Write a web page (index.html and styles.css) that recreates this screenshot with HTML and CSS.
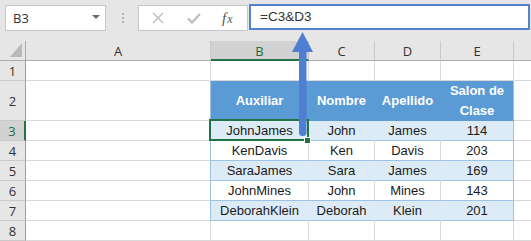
FILE: index.html
```html
<!DOCTYPE html>
<html lang="es">
<head>
    <meta charset="UTF-8">
    <title>Concatenar nombres</title>
    <link rel="stylesheet" href="styles.css">
</head>
<body>
    <div class="formula-bar">
        <div class="name-box">
            <span>B3</span>
            <span class="drop"></span>
        </div>
        <div class="grip"><i></i><i></i><i></i></div>
        <div class="fx-box">
            <svg class="ico" width="12" height="12" viewBox="0 0 12 12"><path d="M1 1L11 11M11 1L1 11" stroke="#bdbdbd" stroke-width="1.4" fill="none"/></svg>
            <svg class="ico" width="14" height="12" viewBox="0 0 14 12"><path d="M1 6.5L5 10.5L13 2" stroke="#bdbdbd" stroke-width="2.2" fill="none"/></svg>
            <span class="fx"><i>f</i><i class="x">x</i></span>
        </div>
        <div class="formula">=C3&amp;D3</div>
    </div>

    <div class="sheet">
        <div class="hd corner"><svg width="12" height="14" viewBox="0 0 12 14"><path d="M12 0V14H0Z" fill="#b9b9b9"/></svg></div>
        <div class="hd col">A</div>
        <div class="hd col on">B</div>
        <div class="hd col">C</div>
        <div class="hd col">D</div>
        <div class="hd col">E</div>
        <div class="hd col last"></div>

        <div class="hd row">1</div>
        <div class="c"></div><div class="c"></div><div class="c"></div><div class="c"></div><div class="c"></div><div class="c last"></div>

        <div class="hd row">2</div>
        <div class="c to-tbl"></div>
        <div class="c th">Auxiliar</div>
        <div class="c th">Nombre</div>
        <div class="c th">Apellido</div>
        <div class="c th end">Salon de<br>Clase</div>
        <div class="c last"></div>

        <div class="hd row on">3</div>
        <div class="c to-tbl"></div>
        <div class="c band sel">JohnJames<span class="handle"></span></div>
        <div class="c band">John</div>
        <div class="c band">James</div>
        <div class="c band end">114</div>
        <div class="c last"></div>

        <div class="hd row">4</div>
        <div class="c to-tbl"></div>
        <div class="c plain">KenDavis</div>
        <div class="c plain">Ken</div>
        <div class="c plain">Davis</div>
        <div class="c plain end">203</div>
        <div class="c last"></div>

        <div class="hd row">5</div>
        <div class="c to-tbl"></div>
        <div class="c band">SaraJames</div>
        <div class="c band">Sara</div>
        <div class="c band">James</div>
        <div class="c band end">169</div>
        <div class="c last"></div>

        <div class="hd row">6</div>
        <div class="c to-tbl"></div>
        <div class="c plain">JohnMines</div>
        <div class="c plain">John</div>
        <div class="c plain">Mines</div>
        <div class="c plain end">143</div>
        <div class="c last"></div>

        <div class="hd row">7</div>
        <div class="c to-tbl"></div>
        <div class="c band">DeborahKlein</div>
        <div class="c band">Deborah</div>
        <div class="c band">Klein</div>
        <div class="c band end">201</div>
        <div class="c last"></div>

        <div class="hd row">8</div>
        <div class="c"></div><div class="c"></div><div class="c"></div><div class="c"></div><div class="c"></div><div class="c last"></div>
    </div>

    <!-- arrow pointing from B3 up to the formula -->
    <svg class="arrow" width="24" height="108" viewBox="0 0 24 108">
        <rect x="8" y="18" width="7.5" height="88" rx="3.5" fill="#4f7fd0"/>
        <path d="M11.5 2L1 22H22Z" fill="#4f7fd0"/>
    </svg>
</body>
</html>
```

FILE: styles.css
```css
body {
    margin: 0;
    position: relative;
    background: #fff;
    font-family: "Liberation Sans", Arial, sans-serif;
    color: #1a1a1a;
    overflow: hidden;
}

/* formula bar */
.formula-bar {
    display: flex;
    align-items: flex-start;
    height: 41px;
    padding: 5px 0 0 5px;
    box-sizing: border-box;
    background: #e6e6e6;
}
.name-box {
    display: flex;
    align-items: center;
    justify-content: space-between;
    width: 101px;
    height: 26px;
    padding: 0 5px 0 7px;
    box-sizing: border-box;
    background: #fff;
    border: 1px solid #c6c6c6;
    font-family: "Open Sans", sans-serif;
    font-size: 13px;
    color: #333;
}
.drop {
    width: 0;
    height: 0;
    border-left: 4px solid transparent;
    border-right: 4px solid transparent;
    border-top: 4px solid #6b6b6b;
    margin-top: -3px;
}
.grip {
    display: flex;
    flex-direction: column;
    gap: 2px;
    width: 31px;
    align-items: center;
    padding-top: 8px;
    margin-left: 1px;
}
.grip i {
    width: 2px;
    height: 2px;
    background: #b5b5b5;
}
.fx-box {
    display: flex;
    align-items: center;
    width: 110px;
    height: 26px;
    box-sizing: border-box;
    background: #fff;
    border: 1px solid #c6c6c6;
    padding-left: 13px;
    gap: 23px;
}
.fx {
    font-family: "Liberation Serif", serif;
    font-size: 15px;
    color: #555;
    margin-left: -2px;
}
.fx .x {
    font-size: 12px;
    margin-left: 1px;
}
.formula {
    width: 281px;
    height: 26px;
    margin: -1px 0 0 1px;
    box-sizing: border-box;
    border: 2px solid #5582cf;
    background: #fff;
    padding-left: 9px;
    font-size: 13.5px;
    line-height: 22px;
    color: #333;
}

/* grid */
.sheet {
    display: grid;
    grid-template-columns: 26px 185px 98px 66px 66px 73px 1fr;
    grid-template-rows: 20px 20px 40px repeat(6, 20px);
}
.sheet > div {
    box-sizing: border-box;
    display: flex;
    align-items: center;
    justify-content: center;
    font-size: 13px;
    border-right: 1px solid #d9d9d9;
    border-bottom: 1px solid #d9d9d9;
}
.hd {
    background: #e6e6e6;
    font-family: "Open Sans", sans-serif;
    font-size: 12px;
    color: #333;
}
.sheet > .col {
    border-right-color: #c9c9c9;
    border-bottom-color: #ababab;
    padding-top: 1px;
}
.sheet > .row {
    border-right-color: #9e9e9e;
    border-bottom-color: #c9c9c9;
}
.sheet > .corner {
    justify-content: flex-end;
    align-items: flex-end;
    padding: 0 3px 3px 0;
    border-right-color: #ababab;
    border-bottom-color: #ababab;
}
.sheet > .col.on {
    background: #d2d2d2;
    border-bottom: 2px solid #217346;
    color: #1e6b41;
}
.sheet > .row.on {
    background: #d2d2d2;
    border-right: 2px solid #217346;
    color: #1e6b41;
}
.sheet > .last {
    border-right: none;
}

/* table */
.sheet > .to-tbl {
    border-right-color: #9bc2e6;
}
.sheet > .th {
    background: #5b9bd5;
    color: #fff;
    font-weight: bold;
    line-height: 20px;
    text-align: center;
    border-right-color: #5b9bd5;
    border-bottom-color: #5b9bd5;
}
.sheet > .band {
    background: #ddebf7;
    border-right-color: #ddebf7;
    border-bottom-color: #9bc2e6;
}
.sheet > .plain {
    border-bottom-color: #9bc2e6;
}
.sheet > .end {
    border-right-color: #9bc2e6;
}
.sheet > .sel {
    position: relative;
}
.sel::after {
    content: "";
    position: absolute;
    left: -2px;
    top: -2px;
    right: -1px;
    bottom: -1px;
    border: 2px solid #217346;
}
.handle {
    position: absolute;
    left: 94px;
    top: 17px;
    width: 5px;
    height: 5px;
    background: #217346;
    box-shadow: 0 0 0 1px #fff;
    z-index: 1;
}

.arrow {
    position: absolute;
    left: 291px;
    top: 30px;
}
```
